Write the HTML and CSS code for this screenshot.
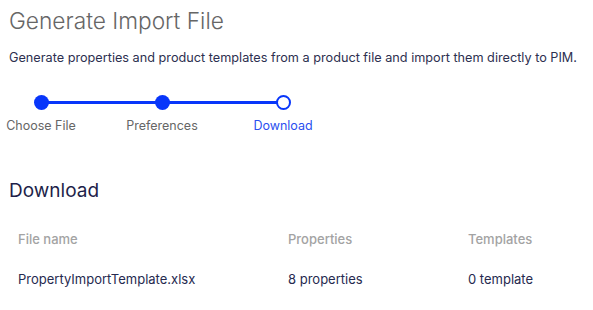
FILE: index.html
```html
<!DOCTYPE html>
<html lang="en">
<head>
    <meta charset="UTF-8">
    <title>Generate Import File</title>
    <link rel="stylesheet" href="styles.css">
</head>
<body>
    <h1 class="title">Generate Import File</h1>
    <p class="intro">Generate properties and product templates from a product file and import them directly to PIM.</p>

    <div class="stepper">
        <div class="step done">
            <span class="dot"></span>
            <span class="label">Choose File</span>
        </div>
        <div class="step done">
            <span class="dot"></span>
            <span class="label">Preferences</span>
        </div>
        <div class="step current">
            <span class="dot"></span>
            <span class="label">Download</span>
        </div>
    </div>

    <h2 class="section">Download</h2>
    <table class="files">
        <thead>
            <tr>
                <th class="col-name">File name</th>
                <th class="col-props">Properties</th>
                <th>Templates</th>
            </tr>
        </thead>
        <tbody>
            <tr>
                <td>PropertyImportTemplate.xlsx</td>
                <td>8 properties</td>
                <td>0 template</td>
            </tr>
        </tbody>
    </table>
</body>
</html>
```

FILE: styles.css
```css
body {
    margin: 0;
    padding: 0 9px;
    background-color: white;
    font-family: Inter, "Noto Sans", sans-serif;
    color: #262a4f;
}

.title {
    margin: 6px 0 0;
    font-size: 22.7px;
    font-weight: 300;
    color: #666;
    line-height: 29px;
}

.intro {
    margin: 15px 0 0;
    font-size: 12.7px;
    line-height: 16px;
    color: #2d3050;
    white-space: nowrap;
}

.stepper {
    display: flex;
    margin: 29px 0 0 -9px;
    width: 327px;
}

.step {
    position: relative;
    width: 82px;
    display: flex;
    flex-direction: column;
    align-items: center;
}

.step + .step {
    margin-left: 39px;
}

/* connector line to the previous step */
.step + .step::before {
    content: "";
    position: absolute;
    top: 6px;
    right: 41px;
    width: 121px;
    height: 3px;
    background-color: #0836fa;
}

.dot {
    position: relative;
    z-index: 1;
    width: 15px;
    height: 15px;
    border-radius: 50%;
    background-color: #0836fa;
    box-sizing: border-box;
}

.current .dot {
    background-color: white;
    border: 2px solid #0836fa;
}

.label {
    margin-top: 8px;
    font-size: 12.5px;
    line-height: 16px;
    color: #666;
}

.current .label {
    color: #2a4ff0;
}

.section {
    margin: 46px 0 0;
    font-size: 19px;
    font-weight: 400;
    line-height: 22px;
    color: #1e1f4a;
}

.files {
    margin-top: 24px;
    border-collapse: collapse;
    font-size: 13px;
}

.files th,
.files td {
    text-align: left;
    padding: 0 9px;
}

.files th {
    font-weight: 500;
    color: #a3a3a3;
    height: 25px;
}

.files td {
    height: 55px;
    color: #262a4f;
}

.col-name {
    width: 252px;
}

.col-props {
    width: 162px;
}
```
